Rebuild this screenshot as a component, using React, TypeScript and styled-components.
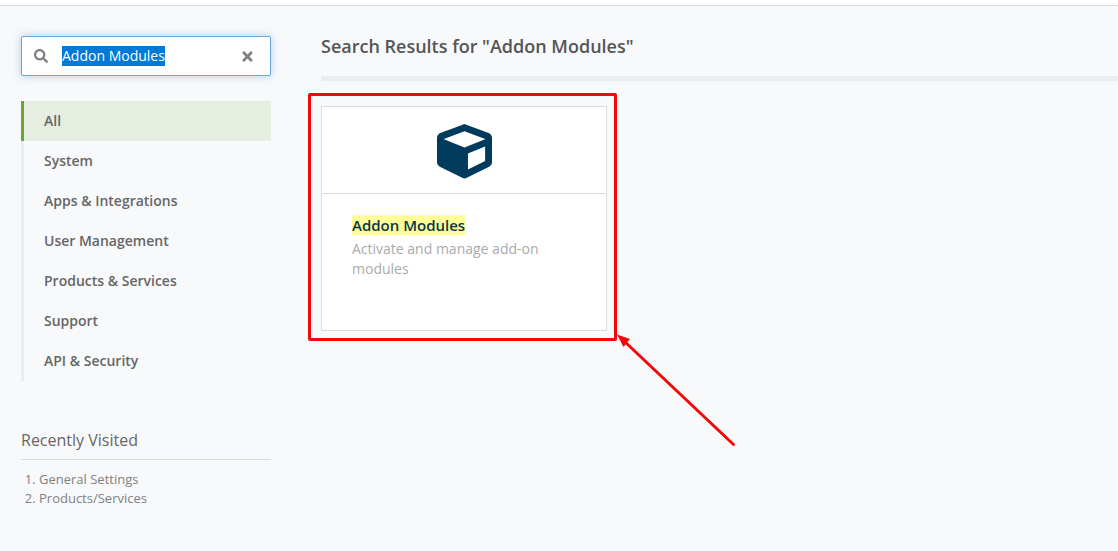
import React, { useEffect, useRef, useState } from "react";
import styled, { createGlobalStyle } from "styled-components";
import { FaCube, FaSearch, FaTimes } from "react-icons/fa";

const GlobalStyle = createGlobalStyle`
  *, *::before, *::after { box-sizing: border-box; }
  body {
    margin: 0;
    background: #f8f9fb;
    color: #666;
    font-family: "Open Sans", sans-serif;
    font-size: 14px;
    line-height: 20px;
  }
`;

const TopBar = styled.header`
  height: 6px;
  background: #fff;
  border-bottom: 1px solid #d9dbde;
`;

const Page = styled.div`
  display: flex;
  align-items: flex-start;
  gap: 50px;
  padding: 30px 0 32px 21px;
`;

const Sidebar = styled.aside`
  flex: 0 0 250px;
`;

const SearchBox = styled.form`
  display: flex;
  align-items: center;
  height: 40px;
  padding: 0 15px 0 12px;
  background: #fff;
  border: 1px solid #66a7e0;
  border-radius: 2px;
  box-shadow: 0 0 8px rgba(102, 167, 224, 0.5);
  color: #808080;
`;

const SearchInput = styled.input`
  flex: 1;
  min-width: 0;
  margin-left: 14px;
  padding: 0;
  border: 0;
  outline: 0;
  background: transparent;
  color: #555;
  font: inherit;

  &::selection {
    background: rgba(0, 120, 215, 0.996);
    color: #fff;
  }
`;

const ClearButton = styled.button`
  display: flex;
  padding: 0;
  border: 0;
  background: none;
  color: #808080;
`;

const Categories = styled.nav`
  display: flex;
  flex-direction: column;
  margin-top: 25px;
`;

const Category = styled.a<{ $active?: boolean }>`
  padding: 10px 20px;
  border-left: 3px solid ${(p) => (p.$active ? "#68a63c" : "#ebecee")};
  background: ${(p) => (p.$active ? "#e6eee2" : "transparent")};
  color: #666;
  font-weight: 600;
  text-decoration: none;
`;

const RecentTitle = styled.h2`
  margin: 48px 0 0;
  padding-bottom: 8px;
  border-bottom: 1px solid #d9dbde;
  color: #666;
  font-size: 16px;
  font-weight: 400;
  line-height: 22px;
`;

const RecentList = styled.ol`
  margin: 10px 0 0;
  padding-left: 18px;
  color: #808080;
  font-size: 13px;
  line-height: 19px;
`;

const RecentLink = styled.a`
  color: inherit;
  text-decoration: none;
`;

const Results = styled.main`
  flex: 1;
  min-width: 0;
`;

const ResultsTitle = styled.h1`
  margin: 0;
  padding-bottom: 20px;
  border-bottom: 5px solid #ebecee;
  color: #555;
  font-size: 18px;
  font-weight: 600;
  line-height: 20px;
`;

const CardFrame = styled.div`
  position: relative;
  width: 286px;
  margin-top: 25px;
`;

const Card = styled.a`
  display: block;
  background: #fff;
  border: 1px solid #d9dbde;
  text-decoration: none;
`;

const CardIcon = styled.div`
  display: flex;
  align-items: center;
  justify-content: center;
  height: 87px;
  padding-top: 2px;
  border-bottom: 1px solid #d9dbde;
  color: #003a5d;
`;

const CardBody = styled.div`
  min-height: 136px;
  padding: 21px 30px;
`;

const CardTitle = styled.h3`
  margin: 0 0 4px;
  color: #0a3548;
  font-size: 15px;
  font-weight: 600;
  line-height: 20px;
`;

const Highlight = styled.mark`
  background: #ffff99;
  color: inherit;
`;

const CardText = styled.p`
  margin: 0;
  color: #aaa;
`;

const Outline = styled.div`
  position: absolute;
  inset: -13px -10px -10px -13px;
  border: 3px solid #f5060a;
  border-radius: 2px;
  pointer-events: none;
`;

const Arrow = styled.svg`
  position: absolute;
  top: 100%;
  left: 100%;
  margin: 2px 0 0 9px;
  pointer-events: none;
`;

const categories = [
  "All",
  "System",
  "Apps & Integrations",
  "User Management",
  "Products & Services",
  "Support",
  "API & Security",
];

const recent = ["General Settings", "Products/Services"];

export default function App() {
  const [query, setQuery] = useState("Addon Modules");
  const [active, setActive] = useState("All");
  const input = useRef<HTMLInputElement>(null);

  useEffect(() => {
    input.current?.focus();
    input.current?.select();
  }, []);

  return (
    <>
      <GlobalStyle />
      <TopBar />
      <Page>
        <Sidebar>
          <SearchBox role="search" onSubmit={(e) => e.preventDefault()}>
            <FaSearch size={14} aria-hidden />
            <SearchInput
              ref={input}
              type="text"
              aria-label="Search settings"
              value={query}
              onChange={(e) => setQuery(e.target.value)}
            />
            <ClearButton type="button" aria-label="Clear search" onClick={() => setQuery("")}>
              <FaTimes size={15} />
            </ClearButton>
          </SearchBox>
          <Categories aria-label="Categories">
            {categories.map((name) => (
              <Category key={name} href="#" $active={name === active} onClick={() => setActive(name)}>
                {name}
              </Category>
            ))}
          </Categories>
          <RecentTitle>Recently Visited</RecentTitle>
          <RecentList>
            {recent.map((name) => (
              <li key={name}>
                <RecentLink href="#">{name}</RecentLink>
              </li>
            ))}
          </RecentList>
        </Sidebar>
        <Results>
          <ResultsTitle>Search Results for "Addon Modules"</ResultsTitle>
          <CardFrame>
            <Card href="#">
              <CardIcon>
                <FaCube size={55} aria-hidden />
              </CardIcon>
              <CardBody>
                <CardTitle>
                  <Highlight>Addon Modules</Highlight>
                </CardTitle>
                <CardText>Activate and manage add-on modules</CardText>
              </CardBody>
            </Card>
            <Outline />
            <Arrow width="122" height="114" viewBox="0 0 122 114" aria-hidden>
              <path d="M8 8L117.500 111.500" stroke="#f5060a" strokeWidth="3" strokeLinecap="round" />
              <path d="M1 1.500L14 6L7.500 14Z" fill="#f5060a" />
            </Arrow>
          </CardFrame>
        </Results>
      </Page>
    </>
  );
}
